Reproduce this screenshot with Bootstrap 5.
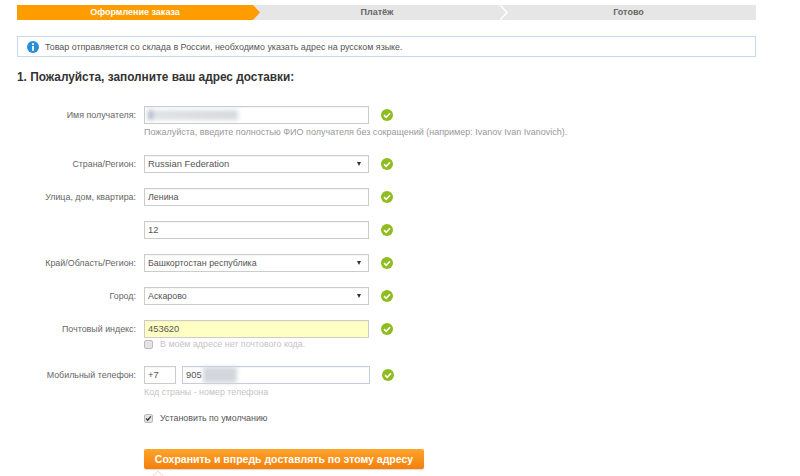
<!DOCTYPE html>
<html lang="ru">
<head>
<meta charset="utf-8">
<title>Адрес доставки</title>
<link rel="stylesheet" href="https://cdn.jsdelivr.net/npm/bootstrap@5.3.0/dist/css/bootstrap.min.css">
<style>
html,body{height:476px;overflow:hidden;background:#fff}
body{font-family:"Liberation Sans",Arial,sans-serif;font-size:8.9px;color:#555;line-height:12px}
.sheet{padding:5px 44px 0 17px;width:800px;position:relative;height:476px}
.stepper{height:15px;background:#e6e6e6;position:relative;overflow:hidden}
.step-cell{flex:1 1 0;text-align:center;font-weight:700;font-size:9px;line-height:15px;color:#666;position:relative}
.step-cell.is-on{background:#ff9d00;color:#fff}
.step-cell.is-on{flex:0 0 236px}
.step-two{flex:0 0 248px}
.step-arrow{position:absolute;top:0;right:-8px;width:8px;height:15px;z-index:2}
.arrow-one{left:236px}
.arrow-two{left:483px}
.notice{margin-top:16px;height:21px;border:1px solid #c5daef;padding:0 0 0 9px;gap:6px;font-size:8.92px;color:#555}
.title-line{margin:13px 0 22px;font-size:11.85px;line-height:14px;font-weight:700;color:#333}
.field-line{display:flex;align-items:flex-start}
.field-label{width:119px;flex:none;text-align:right;line-height:18px;color:#666;font-size:8.9px;margin-right:8px}
.field-box{width:225px;height:18px;border:1px solid #ccc;background:#fff;font-size:8.9px;line-height:16px;padding:0 3px;color:#555;position:relative;box-shadow:inset 0 1px 1px rgba(0,0,0,.04);flex:none}
.field-box.yellow{background:#ffffc4}
.field-pick::after{content:"";position:absolute;right:7px;top:6px;border-left:2.5px solid transparent;border-right:2.5px solid transparent;border-top:4px solid #333}
.wide-type{font-size:9.4px}
.ok-mark{margin:3px 0 0 12px;flex:none;display:block}
.hint-line{margin-left:127px;color:#999;font-size:9px;line-height:12px;padding-top:2px}
.hint-tight{font-size:8.9px}
.gap-a{margin-top:15px}
.gap-country{margin-top:17px}
.gap-phone{margin-top:16px}
.gap-default{margin-top:14px}
.smear{position:absolute;background:#d3d7dc;filter:blur(2px)}
.smear-name{left:3px;top:3px;width:90px;height:10px;background:linear-gradient(90deg,#a9b6c6 0,#a9b6c6 3px,#dfe2e6 6px,#d6d9dd 100%)}
.smear-phone{left:20px;top:0;width:34px;height:16px}
.tick-box{width:9px;height:9px;border:1px solid #bbb;border-radius:2px;background:#e4e4e4;flex:none;margin-right:7px;display:block}
.check-line{margin-left:127px;display:flex;align-items:center;line-height:12px}
.code-box{width:32px}
.num-box{width:188px;margin-left:6px;border-color:#c8cbdc}
.cta{margin:25px 0 0 127px;width:280px;height:20px;padding:0;border:0;border-radius:2px;font-size:10.5px;line-height:20px;font-weight:700;color:#fff;background:linear-gradient(#ffa42a,#f47f0d);display:block;text-align:center;box-shadow:0 1px 1px rgba(0,0,0,.15)}
.cta:hover{color:#fff;background:linear-gradient(#ffa42a,#f47f0d)}
.tip-point{position:absolute;left:154px;top:472px;width:8px;height:8px;background:#fff;border:1px solid #f3dfd0;transform:rotate(45deg)}
.pale{color:#c4c4c4}
.dark{color:#555}
</style>
</head>
<body>
<main class="sheet">
  <div class="stepper d-flex">
    <div class="step-cell is-on">Оформление заказа</div>
    <div class="step-cell step-two">Платёж</div>
    <div class="step-cell">Готово</div>
    <svg class="step-arrow arrow-one" viewBox="0 0 8 15" aria-hidden="true"><path d="M0 0L7 7.5L0 15Z" fill="#ff9d00"/></svg>
    <svg class="step-arrow arrow-two" viewBox="0 0 8 15" aria-hidden="true"><path d="M0 0L7 7.5L0 15" fill="none" stroke="#fff" stroke-width="1.5"/></svg>
  </div>

  <div class="notice d-flex align-items-center">
    <svg width="12" height="12" viewBox="0 0 12 12" aria-hidden="true"><circle cx="6" cy="6" r="6" fill="#2a8fd6"/><rect x="5.1" y="2.2" width="1.8" height="1.8" fill="#fff"/><rect x="5.1" y="5" width="1.8" height="4.8" fill="#fff"/></svg>
    <span>Товар отправляется со склада в России, необходимо указать адрес на русском языке.</span>
  </div>

  <h1 class="title-line">1. Пожалуйста, заполните ваш адрес доставки:</h1>

  <div class="field-line">
    <div class="field-label">Имя получателя:</div>
    <div class="field-box"><span class="smear smear-name"></span></div>
    <svg class="ok-mark" width="12" height="12" viewBox="0 0 12 12" aria-hidden="true"><circle cx="6" cy="6" r="6" fill="#8fbc1e"/><path d="M3 6.2L5.2 8.3L9 4.2" fill="none" stroke="#fff" stroke-width="1.6"/></svg>
  </div>
  <div class="hint-line">Пожалуйста, введите полностью ФИО получателя без сокращений (например: Ivanov Ivan Ivanovich).</div>

  <div class="field-line gap-country">
    <div class="field-label">Страна/Регион:</div>
    <div class="field-box field-pick wide-type">Russian Federation</div>
    <svg class="ok-mark" width="12" height="12" viewBox="0 0 12 12" aria-hidden="true"><circle cx="6" cy="6" r="6" fill="#8fbc1e"/><path d="M3 6.2L5.2 8.3L9 4.2" fill="none" stroke="#fff" stroke-width="1.6"/></svg>
  </div>
  <div class="field-line gap-a">
    <div class="field-label">Улица, дом, квартира:</div>
    <div class="field-box">Ленина</div>
    <svg class="ok-mark" width="12" height="12" viewBox="0 0 12 12" aria-hidden="true"><circle cx="6" cy="6" r="6" fill="#8fbc1e"/><path d="M3 6.2L5.2 8.3L9 4.2" fill="none" stroke="#fff" stroke-width="1.6"/></svg>
  </div>
  <div class="field-line gap-a">
    <div class="field-label"></div>
    <div class="field-box wide-type">12</div>
    <svg class="ok-mark" width="12" height="12" viewBox="0 0 12 12" aria-hidden="true"><circle cx="6" cy="6" r="6" fill="#8fbc1e"/><path d="M3 6.2L5.2 8.3L9 4.2" fill="none" stroke="#fff" stroke-width="1.6"/></svg>
  </div>
  <div class="field-line gap-a">
    <div class="field-label">Край/Область/Регион:</div>
    <div class="field-box field-pick">Башкортостан республика</div>
    <svg class="ok-mark" width="12" height="12" viewBox="0 0 12 12" aria-hidden="true"><circle cx="6" cy="6" r="6" fill="#8fbc1e"/><path d="M3 6.2L5.2 8.3L9 4.2" fill="none" stroke="#fff" stroke-width="1.6"/></svg>
  </div>
  <div class="field-line gap-a">
    <div class="field-label">Город:</div>
    <div class="field-box field-pick">Аскарово</div>
    <svg class="ok-mark" width="12" height="12" viewBox="0 0 12 12" aria-hidden="true"><circle cx="6" cy="6" r="6" fill="#8fbc1e"/><path d="M3 6.2L5.2 8.3L9 4.2" fill="none" stroke="#fff" stroke-width="1.6"/></svg>
  </div>
  <div class="field-line gap-a">
    <div class="field-label">Почтовый индекс:</div>
    <div class="field-box yellow wide-type">453620</div>
    <svg class="ok-mark" width="12" height="12" viewBox="0 0 12 12" aria-hidden="true"><circle cx="6" cy="6" r="6" fill="#8fbc1e"/><path d="M3 6.2L5.2 8.3L9 4.2" fill="none" stroke="#fff" stroke-width="1.6"/></svg>
  </div>
  <div class="check-line pale"><span class="tick-box"></span><span>В моём адресе нет почтового кода.</span></div>

  <div class="field-line gap-phone">
    <div class="field-label">Мобильный телефон:</div>
    <div class="field-box code-box wide-type">+7</div>
    <div class="field-box num-box wide-type">905<span class="smear smear-phone"></span></div>
    <svg class="ok-mark" width="12" height="12" viewBox="0 0 12 12" aria-hidden="true"><circle cx="6" cy="6" r="6" fill="#8fbc1e"/><path d="M3 6.2L5.2 8.3L9 4.2" fill="none" stroke="#fff" stroke-width="1.6"/></svg>
  </div>
  <div class="hint-line hint-tight pale">Код страны - номер телефона</div>

  <div class="check-line dark gap-default">
    <svg class="tick-box" viewBox="0 0 9 9" aria-hidden="true"><path d="M1.5 4.5L3.5 6.7L7.5 1.8" fill="none" stroke="#333" stroke-width="1.6"/></svg>
    <span>Установить по умолчанию</span>
  </div>

  <button type="button" class="btn cta">Сохранить и впредь доставлять по этому адресу</button>
  <span class="tip-point"></span>
</main>
<script src="https://cdn.jsdelivr.net/npm/bootstrap@5.3.0/dist/js/bootstrap.bundle.min.js"></script>
</body>
</html>
